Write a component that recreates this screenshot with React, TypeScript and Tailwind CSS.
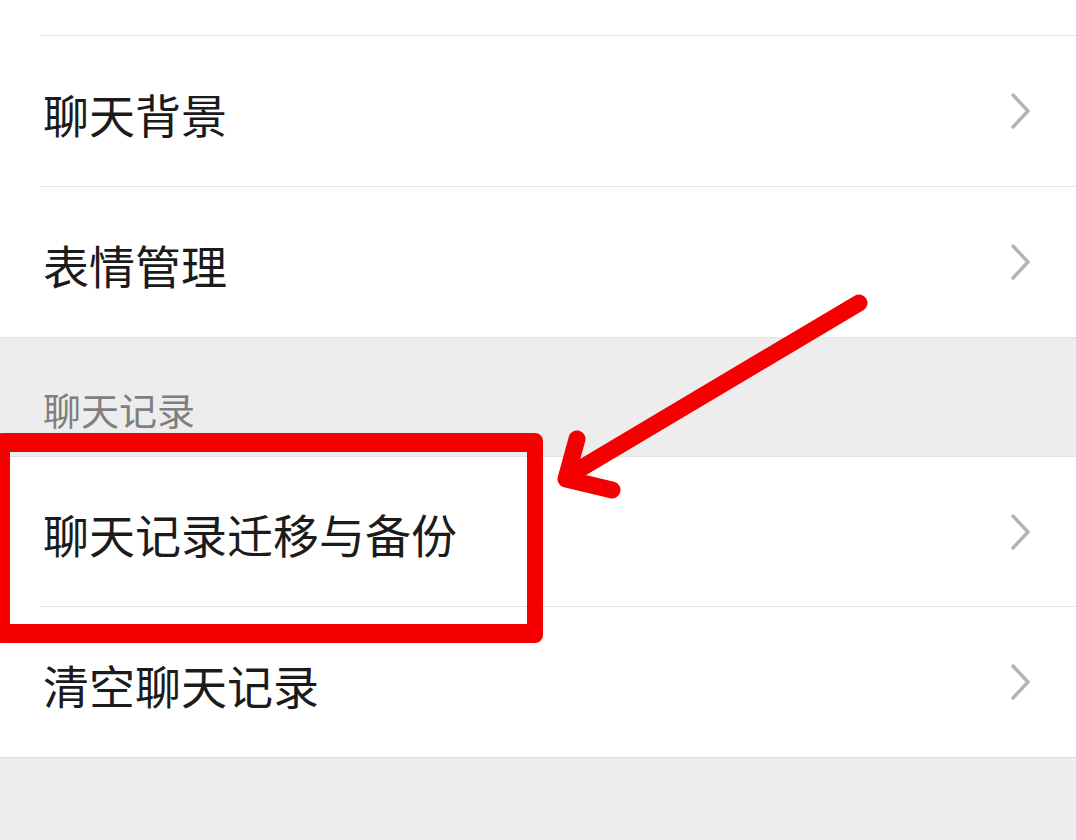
import {FC} from "react";

interface RowProps {
  label: string;
  divider?: boolean;
  height: string;
}

const Chevron: FC = () => (
  <svg width="22" height="38" viewBox="0 0 22 38" fill="none" className="shrink-0">
    <path d="M3 3 L18 19 L3 35" stroke="#b4b4b4" strokeWidth="3.5" strokeLinecap="round" strokeLinejoin="round"/>
  </svg>
);

const Row: FC<RowProps> = ({label, divider = true, height}) => (
  <div className={`pl-[41px] bg-white ${height}`}>
    <div
      className={`h-full flex items-center justify-between pr-[44px] ${divider ? "border-t border-[#e5e5e5]" : ""}`}>
      <span className="pl-[2px] text-[46px] leading-none text-[#1b1b1b] pt-[3px]">{label}</span>
      <Chevron/>
    </div>
  </div>
);

export default function App() {
  return (
    <div
      className="relative w-[1076px] h-[840px] overflow-hidden bg-[#ededed]"
      style={{fontFamily: '"Noto Sans CJK SC", "Noto Sans", sans-serif'}}>
      <div className="bg-white h-[35px]"/>
      <Row label="聊天背景" height="h-[151px]"/>
      <Row label="表情管理" height="h-[151px]"/>

      <div className="h-[119px] pl-[43px] pt-[52px] border-t border-[#e2e2e2]">
        <span className="text-[38px] leading-[38px] text-[#7f7f7f]">聊天记录</span>
      </div>

      <div className="border-t border-[#e2e2e2]">
        <Row label="聊天记录迁移与备份" divider={false} height="h-[149px]"/>
        <Row label="清空聊天记录" height="h-[151px]"/>
      </div>
      <div className="border-t border-[#dedede]"/>

      {/* annotation overlay */}
      <div
        className="absolute left-[-6px] top-[433px] w-[549px] h-[210px] border-y-[19px] border-x-[16px] border-[#f50000] rounded-[8px]"/>
      <svg className="absolute inset-0 pointer-events-none" width="1076" height="840" viewBox="0 0 1076 840">
        <path
          d="M859 303 L568 476 M577 439 L566 479 L612 490"
          stroke="#f50000"
          strokeWidth="17"
          strokeLinecap="round"
          strokeLinejoin="round"
          fill="none"/>
      </svg>
    </div>
  );
}
